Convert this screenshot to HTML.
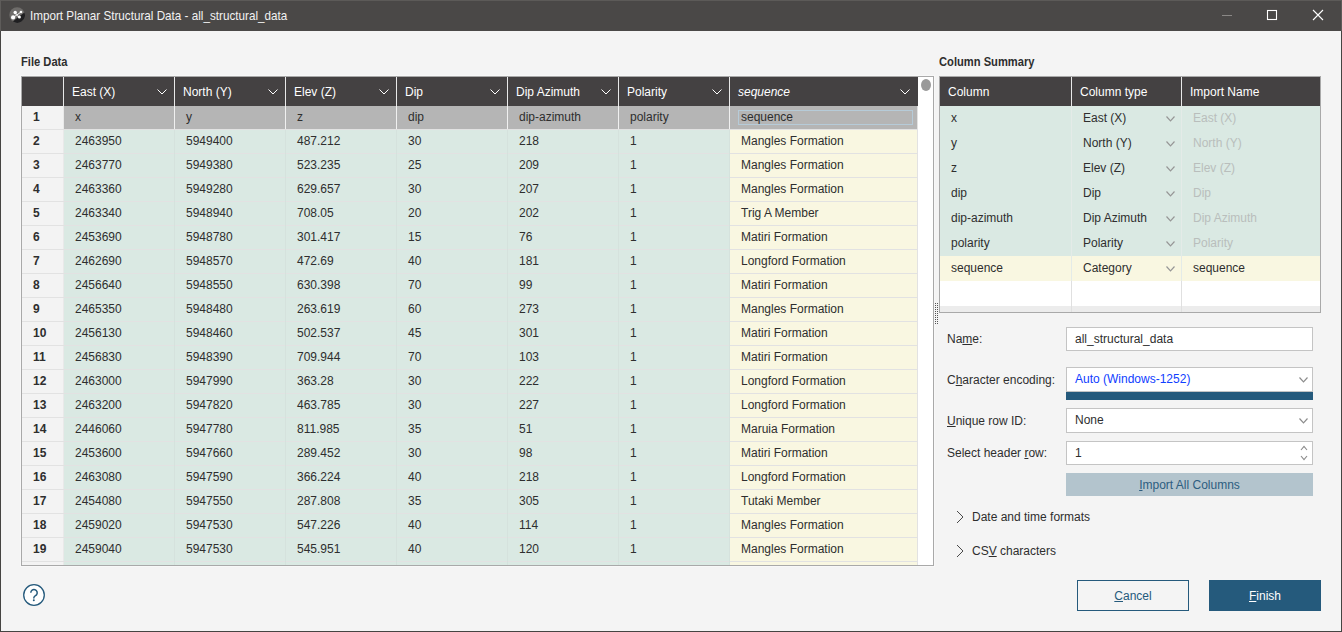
<!DOCTYPE html>
<html><head><meta charset="utf-8"><style>
html,body{margin:0;padding:0;}
body{width:1342px;height:632px;position:relative;overflow:hidden;background:#f4f4f4;font-family:"Liberation Sans",sans-serif;font-size:12px;color:#2e2e2e;}
body>div,body>span,body>svg{position:absolute;}
.t{position:absolute;line-height:0;white-space:nowrap;}
.t::before{content:"";display:inline-block;height:0;}
.b{font-weight:bold;}
.w{color:#ffffff;}
.u{text-decoration:underline;text-decoration-thickness:1px;text-underline-offset:1px;}
</style></head><body>
<div style="left:0px;top:0px;width:1342px;height:31px;background:#4a4847;"></div>
<div style="left:0px;top:0px;width:1342px;height:1px;background:#5c5a58;"></div>
<div style="left:0px;top:31px;width:1px;height:601px;background:#454442;"></div>
<div style="left:1341px;top:31px;width:1px;height:601px;background:#454442;"></div>
<div style="left:1341px;top:0px;width:1px;height:31px;background:#5e5c5a;"></div>
<div style="left:0px;top:0px;width:1px;height:31px;background:#5e5c5a;"></div>
<div style="left:0px;top:631px;width:1342px;height:1px;background:#454442;"></div>
<svg style="left:8px;top:6px" width="20" height="20" viewBox="0 0 20 20"><circle cx="9.1" cy="9.05" r="7.8" fill="#6e6c6a"/><path d="M4.9 15.6 Q9 11.8 16.5 6.5 A7.8 7.8 0 0 1 4.9 15.6 Z" fill="#1f1f21"/><path d="M7.2 6.5 L8.6 9.2 L13 6 M8.6 9.2 L5.1 11.4 M8.6 9.2 L11.4 11.1" stroke="#f4f4f4" stroke-width="1" fill="none"/><circle cx="7.2" cy="6.5" r="1.7" fill="#fff"/><circle cx="13" cy="6" r="1.3" fill="#fff"/><circle cx="5.1" cy="11.4" r="2.1" fill="#fff"/><circle cx="11.4" cy="11.1" r="1.5" fill="#fff"/></svg>
<span class="t" style="left:30px;top:16px;color:#f2f2f2;font-size:12.6px;transform:scaleX(0.928);transform-origin:0 0;">Import Planar Structural Data - all_structural_data</span>
<div style="left:1222px;top:15px;width:10px;height:1px;background:#8a8886;"></div>
<svg style="left:1266px;top:9px" width="12" height="12"><rect x="1.5" y="1.5" width="9" height="9" fill="none" stroke="#ffffff" stroke-width="1.1"/></svg>
<svg style="left:1312px;top:9px" width="12" height="12"><path d="M1 1 L11 11 M11 1 L1 11" stroke="#ffffff" stroke-width="1.1"/></svg>
<span class="t b" style="left:21px;top:62px;transform:scaleX(0.93);transform-origin:0 0;">File Data</span>
<span class="t b" style="left:939px;top:62px;transform:scaleX(0.93);transform-origin:0 0;">Column Summary</span>
<div style="left:20px;top:75px;width:915px;height:492px;background:#f8f8f8;"></div>
<div style="left:21px;top:76px;width:913px;height:490px;background:#a9a9a9;"></div>
<div style="left:22px;top:77px;width:911px;height:488px;background:#ffffff;"></div>
<div style="left:22px;top:77px;width:896px;height:29px;background:#444142;"></div>
<div style="left:63px;top:77px;width:1px;height:29px;background:#e8e8e8;"></div>
<div style="left:174px;top:77px;width:1px;height:29px;background:#e8e8e8;"></div>
<div style="left:285px;top:77px;width:1px;height:29px;background:#e8e8e8;"></div>
<div style="left:396px;top:77px;width:1px;height:29px;background:#e8e8e8;"></div>
<div style="left:507px;top:77px;width:1px;height:29px;background:#e8e8e8;"></div>
<div style="left:618px;top:77px;width:1px;height:29px;background:#e8e8e8;"></div>
<div style="left:729px;top:77px;width:1px;height:29px;background:#e8e8e8;"></div>
<span class="t w" style="left:72px;top:92px;">East (X)</span>
<svg style="left:157px;top:89px" width="10" height="6" viewBox="0 0 10 6"><path d="M0.5 0.5 L5.0 5 L9.5 0.5" fill="none" stroke="#ffffff" stroke-width="1.0"/></svg>
<span class="t w" style="left:183px;top:92px;">North (Y)</span>
<svg style="left:268px;top:89px" width="10" height="6" viewBox="0 0 10 6"><path d="M0.5 0.5 L5.0 5 L9.5 0.5" fill="none" stroke="#ffffff" stroke-width="1.0"/></svg>
<span class="t w" style="left:294px;top:92px;">Elev (Z)</span>
<svg style="left:379px;top:89px" width="10" height="6" viewBox="0 0 10 6"><path d="M0.5 0.5 L5.0 5 L9.5 0.5" fill="none" stroke="#ffffff" stroke-width="1.0"/></svg>
<span class="t w" style="left:405px;top:92px;">Dip</span>
<svg style="left:490px;top:89px" width="10" height="6" viewBox="0 0 10 6"><path d="M0.5 0.5 L5.0 5 L9.5 0.5" fill="none" stroke="#ffffff" stroke-width="1.0"/></svg>
<span class="t w" style="left:516px;top:92px;">Dip Azimuth</span>
<svg style="left:601px;top:89px" width="10" height="6" viewBox="0 0 10 6"><path d="M0.5 0.5 L5.0 5 L9.5 0.5" fill="none" stroke="#ffffff" stroke-width="1.0"/></svg>
<span class="t w" style="left:627px;top:92px;">Polarity</span>
<svg style="left:712px;top:89px" width="10" height="6" viewBox="0 0 10 6"><path d="M0.5 0.5 L5.0 5 L9.5 0.5" fill="none" stroke="#ffffff" stroke-width="1.0"/></svg>
<span class="t w" style="left:738px;top:92px;font-style:italic;">sequence</span>
<svg style="left:900px;top:89px" width="10" height="6" viewBox="0 0 10 6"><path d="M0.5 0.5 L5.0 5 L9.5 0.5" fill="none" stroke="#ffffff" stroke-width="1.0"/></svg>
<div style="left:22px;top:106px;width:896px;height:1px;background:#ffffff;"></div>
<div style="left:22px;top:106px;width:41px;height:459px;background:#f3f3f3;"></div>
<div style="left:64px;top:106px;width:854px;height:23px;background:#b5b5b5;"></div>
<div style="left:174px;top:106px;width:1px;height:23px;background:#f0f0f0;"></div>
<div style="left:285px;top:106px;width:1px;height:23px;background:#f0f0f0;"></div>
<div style="left:396px;top:106px;width:1px;height:23px;background:#f0f0f0;"></div>
<div style="left:507px;top:106px;width:1px;height:23px;background:#f0f0f0;"></div>
<div style="left:618px;top:106px;width:1px;height:23px;background:#f0f0f0;"></div>
<div style="left:729px;top:106px;width:1px;height:23px;background:#f0f0f0;"></div>
<div style="left:63px;top:106px;width:1px;height:459px;background:#e9e9e9;"></div>
<div style="left:64px;top:130px;width:666px;height:435px;background:#dae9e3;"></div>
<div style="left:730px;top:130px;width:188px;height:435px;background:#f9f7e1;"></div>
<div style="left:22px;top:129px;width:896px;height:1px;background:#e2e2e2;"></div>
<div style="left:22px;top:153px;width:896px;height:1px;background:#e2e2e2;"></div>
<div style="left:22px;top:177px;width:896px;height:1px;background:#e2e2e2;"></div>
<div style="left:22px;top:201px;width:896px;height:1px;background:#e2e2e2;"></div>
<div style="left:22px;top:225px;width:896px;height:1px;background:#e2e2e2;"></div>
<div style="left:22px;top:249px;width:896px;height:1px;background:#e2e2e2;"></div>
<div style="left:22px;top:273px;width:896px;height:1px;background:#e2e2e2;"></div>
<div style="left:22px;top:297px;width:896px;height:1px;background:#e2e2e2;"></div>
<div style="left:22px;top:321px;width:896px;height:1px;background:#e2e2e2;"></div>
<div style="left:22px;top:345px;width:896px;height:1px;background:#e2e2e2;"></div>
<div style="left:22px;top:369px;width:896px;height:1px;background:#e2e2e2;"></div>
<div style="left:22px;top:393px;width:896px;height:1px;background:#e2e2e2;"></div>
<div style="left:22px;top:417px;width:896px;height:1px;background:#e2e2e2;"></div>
<div style="left:22px;top:441px;width:896px;height:1px;background:#e2e2e2;"></div>
<div style="left:22px;top:465px;width:896px;height:1px;background:#e2e2e2;"></div>
<div style="left:22px;top:489px;width:896px;height:1px;background:#e2e2e2;"></div>
<div style="left:22px;top:513px;width:896px;height:1px;background:#e2e2e2;"></div>
<div style="left:22px;top:537px;width:896px;height:1px;background:#e2e2e2;"></div>
<div style="left:22px;top:561px;width:896px;height:1px;background:#e2e2e2;"></div>
<div style="left:174px;top:130px;width:1px;height:435px;background:#d5e2dd;"></div>
<div style="left:285px;top:130px;width:1px;height:435px;background:#d5e2dd;"></div>
<div style="left:396px;top:130px;width:1px;height:435px;background:#d5e2dd;"></div>
<div style="left:507px;top:130px;width:1px;height:435px;background:#d5e2dd;"></div>
<div style="left:618px;top:130px;width:1px;height:435px;background:#d5e2dd;"></div>
<div style="left:729px;top:130px;width:1px;height:435px;background:#d5e2dd;"></div>
<div style="left:917px;top:106px;width:1px;height:459px;background:#e2e2e2;"></div>
<div style="left:918px;top:77px;width:15px;height:488px;background:#ffffff;"></div>
<div style="left:921px;top:79px;width:10px;height:12px;border-radius:5px/6px;background:#999999;"></div>
<span class="t b" style="left:33px;top:117px;">1</span>
<span class="t" style="left:75px;top:117px;">x</span>
<span class="t" style="left:186px;top:117px;">y</span>
<span class="t" style="left:297px;top:117px;">z</span>
<span class="t" style="left:408px;top:117px;">dip</span>
<span class="t" style="left:519px;top:117px;">dip-azimuth</span>
<span class="t" style="left:630px;top:117px;">polarity</span>
<span class="t" style="left:741px;top:117px;">sequence</span>
<span class="t b" style="left:33px;top:141px;">2</span>
<span class="t" style="left:75px;top:141px;">2463950</span>
<span class="t" style="left:186px;top:141px;">5949400</span>
<span class="t" style="left:297px;top:141px;">487.212</span>
<span class="t" style="left:408px;top:141px;">30</span>
<span class="t" style="left:519px;top:141px;">218</span>
<span class="t" style="left:630px;top:141px;">1</span>
<span class="t" style="left:741px;top:141px;">Mangles Formation</span>
<span class="t b" style="left:33px;top:165px;">3</span>
<span class="t" style="left:75px;top:165px;">2463770</span>
<span class="t" style="left:186px;top:165px;">5949380</span>
<span class="t" style="left:297px;top:165px;">523.235</span>
<span class="t" style="left:408px;top:165px;">25</span>
<span class="t" style="left:519px;top:165px;">209</span>
<span class="t" style="left:630px;top:165px;">1</span>
<span class="t" style="left:741px;top:165px;">Mangles Formation</span>
<span class="t b" style="left:33px;top:189px;">4</span>
<span class="t" style="left:75px;top:189px;">2463360</span>
<span class="t" style="left:186px;top:189px;">5949280</span>
<span class="t" style="left:297px;top:189px;">629.657</span>
<span class="t" style="left:408px;top:189px;">30</span>
<span class="t" style="left:519px;top:189px;">207</span>
<span class="t" style="left:630px;top:189px;">1</span>
<span class="t" style="left:741px;top:189px;">Mangles Formation</span>
<span class="t b" style="left:33px;top:213px;">5</span>
<span class="t" style="left:75px;top:213px;">2463340</span>
<span class="t" style="left:186px;top:213px;">5948940</span>
<span class="t" style="left:297px;top:213px;">708.05</span>
<span class="t" style="left:408px;top:213px;">20</span>
<span class="t" style="left:519px;top:213px;">202</span>
<span class="t" style="left:630px;top:213px;">1</span>
<span class="t" style="left:741px;top:213px;">Trig A Member</span>
<span class="t b" style="left:33px;top:237px;">6</span>
<span class="t" style="left:75px;top:237px;">2453690</span>
<span class="t" style="left:186px;top:237px;">5948780</span>
<span class="t" style="left:297px;top:237px;">301.417</span>
<span class="t" style="left:408px;top:237px;">15</span>
<span class="t" style="left:519px;top:237px;">76</span>
<span class="t" style="left:630px;top:237px;">1</span>
<span class="t" style="left:741px;top:237px;">Matiri Formation</span>
<span class="t b" style="left:33px;top:261px;">7</span>
<span class="t" style="left:75px;top:261px;">2462690</span>
<span class="t" style="left:186px;top:261px;">5948570</span>
<span class="t" style="left:297px;top:261px;">472.69</span>
<span class="t" style="left:408px;top:261px;">40</span>
<span class="t" style="left:519px;top:261px;">181</span>
<span class="t" style="left:630px;top:261px;">1</span>
<span class="t" style="left:741px;top:261px;">Longford Formation</span>
<span class="t b" style="left:33px;top:285px;">8</span>
<span class="t" style="left:75px;top:285px;">2456640</span>
<span class="t" style="left:186px;top:285px;">5948550</span>
<span class="t" style="left:297px;top:285px;">630.398</span>
<span class="t" style="left:408px;top:285px;">70</span>
<span class="t" style="left:519px;top:285px;">99</span>
<span class="t" style="left:630px;top:285px;">1</span>
<span class="t" style="left:741px;top:285px;">Matiri Formation</span>
<span class="t b" style="left:33px;top:309px;">9</span>
<span class="t" style="left:75px;top:309px;">2465350</span>
<span class="t" style="left:186px;top:309px;">5948480</span>
<span class="t" style="left:297px;top:309px;">263.619</span>
<span class="t" style="left:408px;top:309px;">60</span>
<span class="t" style="left:519px;top:309px;">273</span>
<span class="t" style="left:630px;top:309px;">1</span>
<span class="t" style="left:741px;top:309px;">Mangles Formation</span>
<span class="t b" style="left:33px;top:333px;">10</span>
<span class="t" style="left:75px;top:333px;">2456130</span>
<span class="t" style="left:186px;top:333px;">5948460</span>
<span class="t" style="left:297px;top:333px;">502.537</span>
<span class="t" style="left:408px;top:333px;">45</span>
<span class="t" style="left:519px;top:333px;">301</span>
<span class="t" style="left:630px;top:333px;">1</span>
<span class="t" style="left:741px;top:333px;">Matiri Formation</span>
<span class="t b" style="left:33px;top:357px;">11</span>
<span class="t" style="left:75px;top:357px;">2456830</span>
<span class="t" style="left:186px;top:357px;">5948390</span>
<span class="t" style="left:297px;top:357px;">709.944</span>
<span class="t" style="left:408px;top:357px;">70</span>
<span class="t" style="left:519px;top:357px;">103</span>
<span class="t" style="left:630px;top:357px;">1</span>
<span class="t" style="left:741px;top:357px;">Matiri Formation</span>
<span class="t b" style="left:33px;top:381px;">12</span>
<span class="t" style="left:75px;top:381px;">2463000</span>
<span class="t" style="left:186px;top:381px;">5947990</span>
<span class="t" style="left:297px;top:381px;">363.28</span>
<span class="t" style="left:408px;top:381px;">30</span>
<span class="t" style="left:519px;top:381px;">222</span>
<span class="t" style="left:630px;top:381px;">1</span>
<span class="t" style="left:741px;top:381px;">Longford Formation</span>
<span class="t b" style="left:33px;top:405px;">13</span>
<span class="t" style="left:75px;top:405px;">2463200</span>
<span class="t" style="left:186px;top:405px;">5947820</span>
<span class="t" style="left:297px;top:405px;">463.785</span>
<span class="t" style="left:408px;top:405px;">30</span>
<span class="t" style="left:519px;top:405px;">227</span>
<span class="t" style="left:630px;top:405px;">1</span>
<span class="t" style="left:741px;top:405px;">Longford Formation</span>
<span class="t b" style="left:33px;top:429px;">14</span>
<span class="t" style="left:75px;top:429px;">2446060</span>
<span class="t" style="left:186px;top:429px;">5947780</span>
<span class="t" style="left:297px;top:429px;">811.985</span>
<span class="t" style="left:408px;top:429px;">35</span>
<span class="t" style="left:519px;top:429px;">51</span>
<span class="t" style="left:630px;top:429px;">1</span>
<span class="t" style="left:741px;top:429px;">Maruia Formation</span>
<span class="t b" style="left:33px;top:453px;">15</span>
<span class="t" style="left:75px;top:453px;">2453600</span>
<span class="t" style="left:186px;top:453px;">5947660</span>
<span class="t" style="left:297px;top:453px;">289.452</span>
<span class="t" style="left:408px;top:453px;">30</span>
<span class="t" style="left:519px;top:453px;">98</span>
<span class="t" style="left:630px;top:453px;">1</span>
<span class="t" style="left:741px;top:453px;">Matiri Formation</span>
<span class="t b" style="left:33px;top:477px;">16</span>
<span class="t" style="left:75px;top:477px;">2463080</span>
<span class="t" style="left:186px;top:477px;">5947590</span>
<span class="t" style="left:297px;top:477px;">366.224</span>
<span class="t" style="left:408px;top:477px;">40</span>
<span class="t" style="left:519px;top:477px;">218</span>
<span class="t" style="left:630px;top:477px;">1</span>
<span class="t" style="left:741px;top:477px;">Longford Formation</span>
<span class="t b" style="left:33px;top:501px;">17</span>
<span class="t" style="left:75px;top:501px;">2454080</span>
<span class="t" style="left:186px;top:501px;">5947550</span>
<span class="t" style="left:297px;top:501px;">287.808</span>
<span class="t" style="left:408px;top:501px;">35</span>
<span class="t" style="left:519px;top:501px;">305</span>
<span class="t" style="left:630px;top:501px;">1</span>
<span class="t" style="left:741px;top:501px;">Tutaki Member</span>
<span class="t b" style="left:33px;top:525px;">18</span>
<span class="t" style="left:75px;top:525px;">2459020</span>
<span class="t" style="left:186px;top:525px;">5947530</span>
<span class="t" style="left:297px;top:525px;">547.226</span>
<span class="t" style="left:408px;top:525px;">40</span>
<span class="t" style="left:519px;top:525px;">114</span>
<span class="t" style="left:630px;top:525px;">1</span>
<span class="t" style="left:741px;top:525px;">Mangles Formation</span>
<span class="t b" style="left:33px;top:549px;">19</span>
<span class="t" style="left:75px;top:549px;">2459040</span>
<span class="t" style="left:186px;top:549px;">5947530</span>
<span class="t" style="left:297px;top:549px;">545.951</span>
<span class="t" style="left:408px;top:549px;">40</span>
<span class="t" style="left:519px;top:549px;">120</span>
<span class="t" style="left:630px;top:549px;">1</span>
<span class="t" style="left:741px;top:549px;">Mangles Formation</span>
<div style="left:738px;top:110px;width:173px;height:13px;border:1px solid #b6cbd8;"></div>
<svg style="left:935px;top:303px" width="3" height="21"><rect x="0" y="0" width="1" height="1" fill="#555"/><rect x="2" y="0" width="1" height="1" fill="#555"/><rect x="0" y="2" width="1" height="1" fill="#555"/><rect x="2" y="2" width="1" height="1" fill="#555"/><rect x="0" y="4" width="1" height="1" fill="#555"/><rect x="2" y="4" width="1" height="1" fill="#555"/><rect x="0" y="6" width="1" height="1" fill="#555"/><rect x="2" y="6" width="1" height="1" fill="#555"/><rect x="0" y="8" width="1" height="1" fill="#555"/><rect x="2" y="8" width="1" height="1" fill="#555"/><rect x="0" y="10" width="1" height="1" fill="#555"/><rect x="2" y="10" width="1" height="1" fill="#555"/><rect x="0" y="12" width="1" height="1" fill="#555"/><rect x="2" y="12" width="1" height="1" fill="#555"/><rect x="0" y="14" width="1" height="1" fill="#555"/><rect x="2" y="14" width="1" height="1" fill="#555"/><rect x="0" y="16" width="1" height="1" fill="#555"/><rect x="2" y="16" width="1" height="1" fill="#555"/><rect x="0" y="18" width="1" height="1" fill="#555"/><rect x="2" y="18" width="1" height="1" fill="#555"/><rect x="0" y="20" width="1" height="1" fill="#555"/><rect x="2" y="20" width="1" height="1" fill="#555"/></svg>
<div style="left:939px;top:76px;width:382px;height:237px;background:#a9a9a9;"></div>
<div style="left:940px;top:77px;width:380px;height:235px;background:#ffffff;"></div>
<div style="left:940px;top:77px;width:380px;height:29px;background:#444142;"></div>
<div style="left:1071px;top:77px;width:1px;height:29px;background:#e8e8e8;"></div>
<div style="left:1181px;top:77px;width:1px;height:29px;background:#e8e8e8;"></div>
<span class="t w" style="left:948px;top:92px;">Column</span>
<span class="t w" style="left:1080px;top:92px;">Column type</span>
<span class="t w" style="left:1190px;top:92px;">Import Name</span>
<div style="left:940px;top:106px;width:380px;height:25px;background:#dae9e3;"></div>
<span class="t" style="left:951px;top:118px;">x</span>
<span class="t" style="left:1083px;top:118px;">East (X)</span>
<svg style="left:1166px;top:116px" width="9" height="6" viewBox="0 0 9 6"><path d="M0.5 0.5 L4.5 5 L8.5 0.5" fill="none" stroke="#969696" stroke-width="1.15"/></svg>
<span class="t" style="left:1193px;top:118px;color:#b9bebc;">East (X)</span>
<div style="left:940px;top:131px;width:380px;height:25px;background:#dae9e3;"></div>
<span class="t" style="left:951px;top:143px;">y</span>
<span class="t" style="left:1083px;top:143px;">North (Y)</span>
<svg style="left:1166px;top:141px" width="9" height="6" viewBox="0 0 9 6"><path d="M0.5 0.5 L4.5 5 L8.5 0.5" fill="none" stroke="#969696" stroke-width="1.15"/></svg>
<span class="t" style="left:1193px;top:143px;color:#b9bebc;">North (Y)</span>
<div style="left:940px;top:156px;width:380px;height:25px;background:#dae9e3;"></div>
<span class="t" style="left:951px;top:168px;">z</span>
<span class="t" style="left:1083px;top:168px;">Elev (Z)</span>
<svg style="left:1166px;top:166px" width="9" height="6" viewBox="0 0 9 6"><path d="M0.5 0.5 L4.5 5 L8.5 0.5" fill="none" stroke="#969696" stroke-width="1.15"/></svg>
<span class="t" style="left:1193px;top:168px;color:#b9bebc;">Elev (Z)</span>
<div style="left:940px;top:181px;width:380px;height:25px;background:#dae9e3;"></div>
<span class="t" style="left:951px;top:193px;">dip</span>
<span class="t" style="left:1083px;top:193px;">Dip</span>
<svg style="left:1166px;top:191px" width="9" height="6" viewBox="0 0 9 6"><path d="M0.5 0.5 L4.5 5 L8.5 0.5" fill="none" stroke="#969696" stroke-width="1.15"/></svg>
<span class="t" style="left:1193px;top:193px;color:#b9bebc;">Dip</span>
<div style="left:940px;top:206px;width:380px;height:25px;background:#dae9e3;"></div>
<span class="t" style="left:951px;top:218px;">dip-azimuth</span>
<span class="t" style="left:1083px;top:218px;">Dip Azimuth</span>
<svg style="left:1166px;top:216px" width="9" height="6" viewBox="0 0 9 6"><path d="M0.5 0.5 L4.5 5 L8.5 0.5" fill="none" stroke="#969696" stroke-width="1.15"/></svg>
<span class="t" style="left:1193px;top:218px;color:#b9bebc;">Dip Azimuth</span>
<div style="left:940px;top:231px;width:380px;height:25px;background:#dae9e3;"></div>
<span class="t" style="left:951px;top:243px;">polarity</span>
<span class="t" style="left:1083px;top:243px;">Polarity</span>
<svg style="left:1166px;top:241px" width="9" height="6" viewBox="0 0 9 6"><path d="M0.5 0.5 L4.5 5 L8.5 0.5" fill="none" stroke="#969696" stroke-width="1.15"/></svg>
<span class="t" style="left:1193px;top:243px;color:#b9bebc;">Polarity</span>
<div style="left:940px;top:256px;width:380px;height:25px;background:#f9f7e1;"></div>
<span class="t" style="left:951px;top:268px;">sequence</span>
<span class="t" style="left:1083px;top:268px;">Category</span>
<svg style="left:1166px;top:266px" width="9" height="6" viewBox="0 0 9 6"><path d="M0.5 0.5 L4.5 5 L8.5 0.5" fill="none" stroke="#969696" stroke-width="1.15"/></svg>
<span class="t" style="left:1193px;top:268px;">sequence</span>
<div style="left:1071px;top:106px;width:1px;height:200px;background:#e4ebe8;"></div>
<div style="left:1181px;top:106px;width:1px;height:200px;background:#e4ebe8;"></div>
<div style="left:940px;top:306px;width:380px;height:6px;background:#ececec;"></div>
<div style="left:1071px;top:281px;width:1px;height:31px;background:#e0e0e0;"></div>
<div style="left:1181px;top:281px;width:1px;height:31px;background:#e0e0e0;"></div>
<span class="t" style="left:947px;top:339px;">Na<span class="u">m</span>e:</span>
<div style="left:1066px;top:327px;width:245px;height:22px;border:1px solid #c4c4c4;background:#fff;"></div>
<span class="t" style="left:1075px;top:339px;">all_structural_data</span>
<span class="t" style="left:947px;top:380px;">C<span class="u">h</span>aracter encoding:</span>
<div style="left:1066px;top:367px;width:245px;height:23px;border:1px solid #c4c4c4;background:#fff;"></div>
<span class="t" style="left:1075px;top:379px;color:#1040ff;">Auto (Windows-1252)</span>
<svg style="left:1299px;top:377px" width="9" height="6" viewBox="0 0 9 6"><path d="M0.5 0.5 L4.5 5 L8.5 0.5" fill="none" stroke="#8c8c8c" stroke-width="1.15"/></svg>
<div style="left:1066px;top:392px;width:247px;height:8px;background:#255a7c;"></div>
<span class="t" style="left:947px;top:421px;"><span class="u">U</span>nique row ID:</span>
<div style="left:1066px;top:408px;width:245px;height:23px;border:1px solid #c4c4c4;background:#fff;"></div>
<span class="t" style="left:1075px;top:420px;">None</span>
<svg style="left:1299px;top:418px" width="9" height="6" viewBox="0 0 9 6"><path d="M0.5 0.5 L4.5 5 L8.5 0.5" fill="none" stroke="#8c8c8c" stroke-width="1.15"/></svg>
<span class="t" style="left:947px;top:453px;">Select header <span class="u">r</span>ow:</span>
<div style="left:1066px;top:441px;width:245px;height:22px;border:1px solid #c4c4c4;background:#fff;"></div>
<span class="t" style="left:1075px;top:453px;">1</span>
<svg style="left:1300px;top:445px" width="9" height="17"><path d="M1 5 L4 1.5 L7 5 M1 11 L4 14.5 L7 11" fill="none" stroke="#8c8c8c" stroke-width="1.15"/></svg>
<div style="left:1066px;top:473px;width:247px;height:23px;background:#b3c4cd;"></div>
<span class="t" style="left:1066px;top:485px;width:247px;text-align:center;color:#2d5d80;"><span class="u">I</span>mport All Columns</span>
<svg style="left:956px;top:510px" width="9" height="14"><path d="M1 1 L7 7 L1 13" fill="none" stroke="#4a4a4a" stroke-width="1.0"/></svg>
<span class="t" style="left:972px;top:517px;">Date and time formats</span>
<svg style="left:956px;top:544px" width="9" height="14"><path d="M1 1 L7 7 L1 13" fill="none" stroke="#4a4a4a" stroke-width="1.0"/></svg>
<span class="t" style="left:972px;top:551px;">CS<span class="u">V</span> characters</span>
<svg style="left:22px;top:583px" width="24" height="24"><circle cx="12" cy="12" r="10.3" fill="#ffffff" stroke="#255a7c" stroke-width="1.3"/><path d="M8.8 9.8 A3.2 3.2 0 1 1 14.6 11.7 C13.6 12.8 11.8 13.2 11.8 14.9 L11.8 15.4" fill="none" stroke="#255a7c" stroke-width="1.5"/><circle cx="11.8" cy="17.3" r="1.0" fill="#255a7c"/></svg>
<div style="left:1077px;top:580px;width:110px;height:29px;border:1px solid #255a7c;"></div>
<span class="t" style="left:1077px;top:596px;width:112px;text-align:center;color:#255a7c;"><span class="u">C</span>ancel</span>
<div style="left:1209px;top:580px;width:112px;height:31px;background:#255a7c;"></div>
<span class="t" style="left:1209px;top:596px;width:112px;text-align:center;color:#fff;"><span class="u">F</span>inish</span>
</body></html>
